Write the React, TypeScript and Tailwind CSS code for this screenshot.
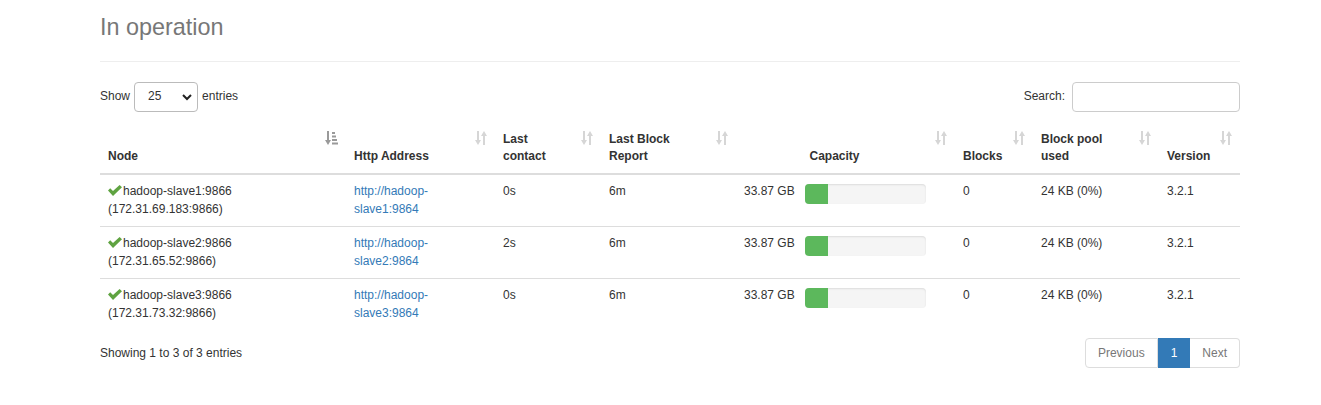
import React from "react"

type Node = {
  name: string
  addr: string
  http: string
  contact: string
  report: string
  capacity: string
  used: number
  blocks: string
  pool: string
  version: string
}

const nodes: Node[] = [
  {
    name: "hadoop-slave1:9866",
    addr: "(172.31.69.183:9866)",
    http: "http://hadoop-slave1:9864",
    contact: "0s",
    report: "6m",
    capacity: "33.87 GB",
    used: 19,
    blocks: "0",
    pool: "24 KB (0%)",
    version: "3.2.1",
  },
  {
    name: "hadoop-slave2:9866",
    addr: "(172.31.65.52:9866)",
    http: "http://hadoop-slave2:9864",
    contact: "2s",
    report: "6m",
    capacity: "33.87 GB",
    used: 19,
    blocks: "0",
    pool: "24 KB (0%)",
    version: "3.2.1",
  },
  {
    name: "hadoop-slave3:9866",
    addr: "(172.31.73.32:9866)",
    http: "http://hadoop-slave3:9864",
    contact: "0s",
    report: "6m",
    capacity: "33.87 GB",
    used: 19,
    blocks: "0",
    pool: "24 KB (0%)",
    version: "3.2.1",
  },
]

// unsorted: down arrow + up arrow, very light
const SortBoth = () => (
  <svg width="12" height="14" viewBox="0 0 12 14" className="absolute right-[8px] top-[8px]">
    <g fill="#d6d6d6">
      <rect x="2" y="0" width="2" height="11" />
      <path d="M0 9 L6 9 L3 14 Z" />
      <rect x="8" y="3" width="2" height="11" />
      <path d="M6 5 L12 5 L9 0 Z" />
    </g>
  </svg>
)

// sorted ascending: down arrow + stepped bars
const SortAsc = () => (
  <svg width="13" height="14" viewBox="0 0 13 14" className="absolute right-[8px] top-[8px]">
    <g fill="#9a9a9a">
      <rect x="2" y="0" width="2" height="11" />
      <path d="M0 9 L6 9 L3 14 Z" />
      <rect x="7" y="1" width="3" height="2" />
      <rect x="7" y="4.5" width="4" height="2" />
      <rect x="7" y="8" width="5" height="2" />
      <rect x="7" y="11.5" width="6" height="2" />
    </g>
  </svg>
)

const Check = () => (
  <svg width="14" height="11" viewBox="0 0 14 11" className="mr-[1px] inline-block align-[-1px]">
    <path d="M0 5.5 L2.2 3.3 L5 6.1 L11.6 0 L14 2.3 L5 11 Z" fill="#5fa341" />
  </svg>
)

const thBase = "relative pl-[8px] pr-[30px] pb-[8px] pt-[8px] align-bottom font-bold border-b-2 border-[#ddd]"
const th = `${thBase} text-left`
const td = "p-[8px] align-top leading-[17.5px] border-t border-[#ddd]"

export default function App() {
  return (
    <div
      className="min-h-[405px] bg-white pl-[100px] text-[12px] leading-[1.42857] text-[#333]"
      style={{ fontFamily: '"Liberation Sans", Arial, Helvetica, sans-serif' }}
    >
      <div className="w-[1140px]">
        <div className="border-b border-[#eee] pb-[20px] pt-[13px]">
          <h1 className="text-[23.4px] font-normal leading-[28px] text-[#777]">In operation</h1>
        </div>

        <div className="mt-[20px] flex items-center justify-between">
          <label className="flex items-center">
            <span>Show</span>
            <span className="relative mx-[4px] inline-block">
              <select
                defaultValue="25"
                className="h-[30px] w-[64px] appearance-none rounded-[4px] border border-[#bbb] bg-white pl-[13px] text-[12px] text-[#333] outline-none"
              >
                <option>10</option>
                <option>25</option>
                <option>50</option>
                <option>100</option>
              </select>
              <svg width="10" height="7" viewBox="0 0 10 7" className="pointer-events-none absolute right-[6px] top-[12px]">
                <path d="M1 1 L5 5 L9 1" stroke="#222" strokeWidth="2" fill="none" />
              </svg>
            </span>
            <span>entries</span>
          </label>
          <label className="flex items-center">
            <span className="mr-[7px]">Search:</span>
            <input className="h-[30px] w-[168px] rounded-[4px] border border-[#ccc] outline-none" />
          </label>
        </div>

        <table className="mt-[11px] w-[1140px] table-fixed border-collapse">
          <colgroup>
            <col className="w-[246px]" />
            <col className="w-[149px]" />
            <col className="w-[106px]" />
            <col className="w-[135px]" />
            <col className="w-[219px]" />
            <col className="w-[78px]" />
            <col className="w-[126px]" />
            <col className="w-[81px]" />
          </colgroup>
          <thead>
            <tr>
              <th className={th}>Node<SortAsc /></th>
              <th className={th}>Http Address<SortBoth /></th>
              <th className={th}>Last<br />contact<SortBoth /></th>
              <th className={th}>Last Block<br />Report<SortBoth /></th>
              <th className={`${thBase} text-center`}>Capacity<SortBoth /></th>
              <th className={th}>Blocks<SortBoth /></th>
              <th className={th}>Block pool<br />used<SortBoth /></th>
              <th className={th}>Version<SortBoth /></th>
            </tr>
          </thead>
          <tbody>
            {nodes.map((n, i) => (
              <tr key={n.name} className={i === 0 ? "[&>td]:border-t-0" : ""}>
                <td className={td}>
                  <Check />
                  {n.name}
                  <br />
                  {n.addr}
                </td>
                <td className={td}>
                  <a href="#" className="text-[#337ab7]">{n.http}</a>
                </td>
                <td className={td}>{n.contact}</td>
                <td className={td}>{n.report}</td>
                <td className={td}>
                  <div className="flex items-start gap-[11px]">
                    <div className="w-[50px] whitespace-nowrap text-right">{n.capacity}</div>
                    <div className="mt-[1px] flex h-[20px] w-[121px] overflow-hidden rounded-[4px] bg-[#f5f5f5] shadow-[inset_0_1px_2px_rgba(0,0,0,0.1)]">
                      <div className="h-full bg-[#5cb85c]" style={{ width: `${n.used}%` }} />
                    </div>
                  </div>
                </td>
                <td className={td}>{n.blocks}</td>
                <td className={td}>{n.pool}</td>
                <td className={td}>{n.version}</td>
              </tr>
            ))}
          </tbody>
        </table>

        <div className="mt-[8px] flex items-center justify-between">
          <div>Showing 1 to 3 of 3 entries</div>
          <ul className="flex h-[30px]">
            <li className="flex items-center rounded-l-[4px] border border-[#ddd] px-[12px] text-[#777]">Previous</li>
            <li className="flex items-center border border-[#337ab7] bg-[#337ab7] px-[12px] text-white">1</li>
            <li className="flex items-center rounded-r-[4px] border border-l-0 border-[#ddd] px-[12px] text-[#777]">Next</li>
          </ul>
        </div>
      </div>
    </div>
  )
}
